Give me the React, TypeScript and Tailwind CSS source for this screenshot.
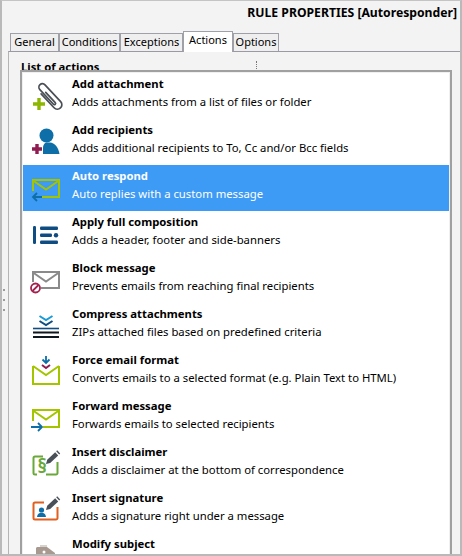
import type { ReactNode } from "react";

const font = { fontFamily: '"Noto Sans", "Liberation Sans", sans-serif' };

const BLUE = "#0e6ea8";
const NAVY = "#0f4c81";
const LIME = "#a4c400";
const WINE = "#8f1d52";
const PEN = "#4a5058";

function Plus({ x, y, color, size = 11 }: { x: number; y: number; color: string; size?: number }) {
  const h = size / 2;
  return <path d={`M${x - h} ${y}H${x + h}M${x} ${y - h}V${y + h}`} stroke={color} strokeWidth="3.4" fill="none" />;
}

function Pencil() {
  return (
    <g fill={PEN}>
      <path d="M15 15l1.200-4.200 8-7.600 3 3.200-8 7.600z" />
      <path d="M25.200 2.200l1-.9 3 3.200-1 .9z" />
    </g>
  );
}

const icons: Record<string, ReactNode> = {
  attachment: (
    <>
      <g transform="translate(18.5 16) rotate(-43)" fill="none" stroke="#4a4f55" strokeWidth="1.700" strokeLinecap="round">
        <path d="M-4 -8V11a4.500 4.500 0 0 0 9 0V-12a3.500 3.500 0 0 0-7 0V8a1.200 1.200 0 0 0 2.400 0V-6" />
      </g>
      <Plus x={8} y={23} color="#8db600" size={12} />
    </>
  ),
  recipients: (
    <>
      <circle cx="15.500" cy="8.500" r="7" fill={BLUE} />
      <path d="M12 27v-6c0-3.500 2-5.500 4-5.500h3c4.500 0 8.500 5 9.500 11.500z" fill={BLUE} />
      <Plus x={6} y={22} color={WINE} size={10} />
    </>
  ),
  respond: (
    <>
      <path d="M2 18V7h26v17H10M2 7.500l13 9 13-9" fill="none" stroke={LIME} strokeWidth="2" />
      <path d="M11 24H2M6 20l-4 4 4 4" fill="none" stroke={BLUE} strokeWidth="1.800" />
    </>
  ),
  composition: (
    <g fill={NAVY}>
      <rect x="2" y="7" width="3" height="18" rx="1.200" />
      <rect x="9" y="7.500" width="18" height="3.500" rx="1.200" />
      <rect x="9" y="14.500" width="12" height="3.500" rx="1.200" />
      <circle cx="25" cy="16.200" r="2.200" />
      <rect x="9" y="21.500" width="18" height="3.500" rx="1.200" />
    </g>
  ),
  block: (
    <>
      <path d="M2 17V7h26v16H10M2 7.500l13 9 13-9" fill="none" stroke="#8a8a8a" strokeWidth="2" />
      <circle cx="4.500" cy="23" r="4.500" fill="#fff" stroke="#a3214f" strokeWidth="1.800" />
      <path d="M1.500 26l6-6" stroke="#a3214f" strokeWidth="1.800" />
    </>
  ),
  compress: (
    <>
      <path d="M8.500 5l6.500 4 6.500-4" fill="none" stroke="#1a9ad6" strokeWidth="2" />
      <path d="M8.500 10l6.500 4 6.500-4" fill="none" stroke={NAVY} strokeWidth="2" />
      <path d="M2 17.500h26" stroke={NAVY} strokeWidth="1.600" />
      <path d="M2 21.500h26M2 26h26" stroke="#10181f" strokeWidth="1.800" />
    </>
  ),
  format: (
    <>
      <path d="M2 9v18h26V9M2 9l13 9 13-9" fill="none" stroke={LIME} strokeWidth="2" />
      <path d="M15 -1v6M11.500 2.500L15 6l3.500-3.500" fill="none" stroke={BLUE} strokeWidth="1.800" />
      <path d="M11 8l4 3 4-3" fill="none" stroke={WINE} strokeWidth="2" />
    </>
  ),
  forward: (
    <>
      <path d="M2 18V7h26v17H12M2 7.500l13 9 13-9" fill="none" stroke={LIME} strokeWidth="2" />
      <path d="M0 24h10M7 20l4 4-4 4" fill="none" stroke={BLUE} strokeWidth="1.800" />
    </>
  ),
  disclaimer: (
    <>
      <path d="M12 7.500H4a1.500 1.500 0 0 0-1.500 1.500v15a1.500 1.500 0 0 0 1.500 1.500h2M15 25.500h10a1.500 1.500 0 0 0 1.500-1.500V13" fill="none" stroke="#6aa83a" strokeWidth="2" />
      <text x="6.500" y="24" fill="#6aa83a" fontSize="19" fontWeight="700">§</text>
      <Pencil />
    </>
  ),
  signature: (
    <>
      <path d="M13 7.500H4a1.500 1.500 0 0 0-1.500 1.500v14a1.500 1.500 0 0 0 1.500 1.500h21a1.500 1.500 0 0 0 1.500-1.500V12" fill="none" stroke="#e0601f" strokeWidth="2" />
      <circle cx="10.500" cy="15" r="2.600" fill={BLUE} />
      <path d="M6 22c.3-3 2-4.200 4.500-4.200S14.700 19 15 22z" fill={BLUE} />
      <Pencil />
    </>
  ),
  subject: (
    <>
      <path d="M5 7l1-1h10l8 6v20H5z" fill="#a89a90" />
      <path d="M9 5h7" stroke="#c9c3be" strokeWidth="1.500" />
      <circle cx="13" cy="11" r="1.500" fill="#fff" />
    </>
  ),
};

const actions = [
  { id: "attachment", title: "Add attachment", desc: "Adds attachments from a list of files or folder" },
  { id: "recipients", title: "Add recipients", desc: "Adds additional recipients to To, Cc and/or Bcc fields" },
  { id: "respond", title: "Auto respond", desc: "Auto replies with a custom message", active: true },
  { id: "composition", title: "Apply full composition", desc: "Adds a header, footer and side-banners" },
  { id: "block", title: "Block message", desc: "Prevents emails from reaching final recipients" },
  { id: "compress", title: "Compress attachments", desc: "ZIPs attached files based on predefined criteria" },
  { id: "format", title: "Force email format", desc: "Converts emails to a selected format (e.g. Plain Text to HTML)" },
  { id: "forward", title: "Forward message", desc: "Forwards emails to selected recipients" },
  { id: "disclaimer", title: "Insert disclaimer", desc: "Adds a disclaimer at the bottom of correspondence" },
  { id: "signature", title: "Insert signature", desc: "Adds a signature right under a message" },
  { id: "subject", title: "Modify subject" },
];

const tabs = [
  { label: "General", w: "w-[49px]" },
  { label: "Conditions", w: "w-[61px]" },
  { label: "Exceptions", w: "w-[63px]" },
  { label: "Actions", w: "w-[50px]", active: true },
  { label: "Options", w: "w-[46px]" },
];

export default function App() {
  return (
    <div
      style={font}
      className="relative flex h-[556px] w-[462px] flex-col overflow-hidden border-x-2 border-t border-b-2 border-x-[#b9b9b9] border-t-[#c4c4c4] border-b-[#b9b9b9] bg-[#f3f3f3] text-[11.3px] text-black"
    >
      <div className="flex h-[30px] shrink-0 items-center justify-end pb-[5px] pr-[3px] text-[12.2px] font-bold">
        RULE PROPERTIES [Autoresponder]
      </div>

      <div className="ml-[8px] flex h-[20px] shrink-0 items-end">
        {tabs.map((t) =>
          t.active ? (
            <div
              key={t.label}
              className={`${t.w} relative z-10 -mb-px flex h-[21px] items-center justify-center border-x border-t border-[#a0a0a8] bg-white pb-[3px] text-[11px]`}
            >
              {t.label}
            </div>
          ) : (
            <div
              key={t.label}
              className={`${t.w} flex h-[18px] items-center justify-center border-x border-t border-[#a0a0a8] bg-[#efefef] text-[11px]`}
            >
              {t.label}
            </div>
          ),
        )}
      </div>

      <div className="ml-[6px] flex-1 border-l border-t border-l-[#b4b4b4] border-t-[#9a9aa5] pl-[12px] pt-[7px]">
        <div className="relative flex h-[20px] w-[236px] justify-between font-bold">
          <span>List of actions</span>
          <span className="mt-[2px] h-[16px] border-r border-dotted border-[#777]" />
        </div>
      </div>

      {/* splitter grip */}
      <div className="absolute left-[1px] top-[288px] flex flex-col gap-[8px]">
        <span className="h-[2px] w-[2px] bg-[#9a9a9a]" />
        <span className="h-[2px] w-[2px] bg-[#9a9a9a]" />
        <span className="h-[2px] w-[2px] bg-[#9a9a9a]" />
      </div>

      {/* dropdown list lies over the panel */}
      <div className="absolute left-[18px] top-[69px] h-[500px] w-[432px] border-2 border-[#a0a0a0] bg-[#f0f0f0] px-[1px] pt-[1px]">
        <div className="h-full bg-white">
          {actions.map((a) => (
            <div key={a.id} className={`flex h-[46px] ${a.active ? "bg-[#3d9af5] text-white" : ""}`}>
              <svg viewBox="0 0 32 32" className="ml-[8px] mt-[8px] h-[32px] w-[32px] shrink-0 overflow-visible">
                {icons[a.id]}
              </svg>
              <div className="ml-[9px] flex flex-col pt-[1.5px]">
                <span className="h-[18px] font-bold leading-[18px]">{a.title}</span>
                {a.desc && <span className="h-[18px] leading-[18px]">{a.desc}</span>}
              </div>
            </div>
          ))}
        </div>
      </div>
    </div>
  );
}
